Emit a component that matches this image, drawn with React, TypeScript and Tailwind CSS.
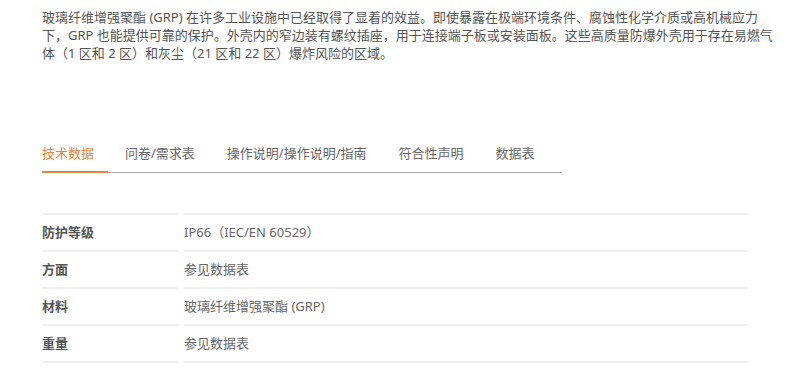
import React from "react";

const font = { fontFamily: '"Noto Sans", "Noto Sans CJK SC", sans-serif' };

const tabs = ["技术数据", "问卷/需求表", "操作说明/操作说明/指南", "符合性声明", "数据表"];

const rows: [string, string][] = [
  ["防护等级", "IP66（IEC/EN 60529）"],
  ["方面", "参见数据表"],
  ["材料", "玻璃纤维增强聚酯 (GRP)"],
  ["重量", "参见数据表"],
];

export default function App() {
  return (
    <div className="w-[800px] h-[372px] bg-white overflow-hidden" style={font}>
      <div className="pl-[42px] pt-[8px]">
        <p className="text-[13px] leading-[18px] text-[#555]">
          玻璃纤维增强聚酯 (GRP) 在许多工业设施中已经取得了显着的效益。即使暴露在极端环境条件、腐蚀性化学介质或高机械应力
          <br />
          下，GRP 也能提供可靠的保护。外壳内的窄边装有螺纹插座，用于连接端子板或安装面板。这些高质量防爆外壳用于存在易燃气
          <br />
          体（1 区和 2 区）和灰尘（21 区和 22 区）爆炸风险的区域。
        </p>

        <div className="mt-[82px] flex w-[520px] border-b border-[#aaa]">
          {tabs.map((t, i) => (
            <div
              key={t}
              className={
                i === 0
                  ? "pr-[14px] pb-[9px] text-[13px] leading-[18px] text-[#e5853a] border-b-2 border-[#e5853a] -mb-px"
                  : "pl-[17px] pr-[15px] pb-[10px] text-[13px] leading-[18px] text-[#666]"
              }
            >
              {t}
            </div>
          ))}
        </div>

        <div className="mt-[40px] grid grid-cols-[136px_564px] gap-x-[6px]">
          {rows.map(([k, v]) => (
            <React.Fragment key={k}>
              <div className="border-t-2 border-[#efefef] h-[37px] flex items-center text-[13px] font-bold text-[#555]">
                {k}
              </div>
              <div className="border-t-2 border-[#efefef] h-[37px] flex items-center text-[13px] text-[#666]">
                {v}
              </div>
            </React.Fragment>
          ))}
          <div className="border-t-2 border-[#efefef]" />
          <div className="border-t-2 border-[#efefef]" />
        </div>
      </div>
    </div>
  );
}
